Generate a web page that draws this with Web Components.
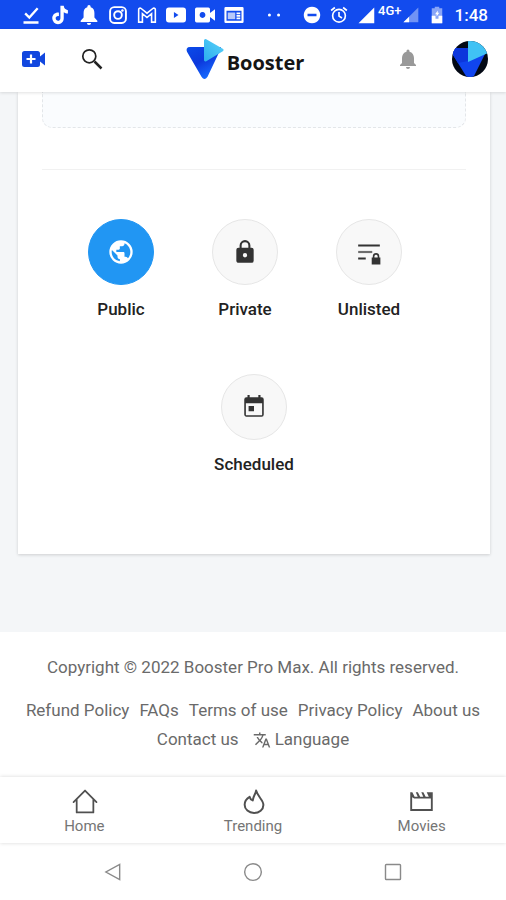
<!DOCTYPE html>
<html lang="en">
<head>
<meta charset="utf-8">
<meta name="viewport" content="width=device-width, initial-scale=1">
<title>Booster</title>
<style>
body { margin: 0; min-height: 100vh; display: flex; flex-direction: column; background: #f4f6f8; color: #222; font-family: Roboto, "Liberation Sans", sans-serif; font-size: 16px; }
main { flex: 1 0 auto; padding: 0 16px 77px 18px; }
</style>
</head>
<body>
<status-bar></status-bar>
<app-header></app-header>
<main><upload-card><privacy-picker></privacy-picker></upload-card></main>
<app-footer>Copyright © 2022 Booster Pro Max. All rights reserved.</app-footer>
<tab-bar>
  <tab-item icon="home" href="#home">Home</tab-item>
  <tab-item icon="fire" href="#trending">Trending</tab-item>
  <tab-item icon="movie" href="#movies">Movies</tab-item>
</tab-bar>
<system-nav></system-nav>
<script>
const ICONS = {
  download: '<path d="M5 10l5 5L20 4M3 21h18" fill="none" stroke="currentColor" stroke-width="2.8"/>',
  tiktok: '<path d="M12.5 1h4c.3 3 2 4.800 5 5.200v4c-2 0-3.600-.6-5-1.600v7.400c0 4.300-3.200 7-6.900 7A6.900 6.900 0 0 1 2.700 16c0-4.300 3.600-7.300 8-6.800v4.200c-2.200-.6-3.900.7-3.900 2.600 0 1.700 1.300 2.900 2.900 2.900s2.800-1.300 2.800-3.100z"/>',
  alert: '<path d="M12 0a2 2 0 0 0-2 2v.7C6.800 3.500 5.500 6.200 5.500 9.500V15L2 19v1.500h20V19l-3.500-4V9.500c0-3.300-1.300-6-4.500-6.800V2a2 2 0 0 0-2-2zM9.500 21.500a2.500 2.500 0 0 0 5 0z"/>',
  instagram: '<g fill="none" stroke="currentColor" stroke-width="2.300"><rect x="2.500" y="2.500" width="19" height="19" rx="5"/><circle cx="12" cy="12" r="4.600"/></g><circle cx="17.300" cy="6.700" r="1.500"/>',
  gmail: '<path d="M2 20.500V5.500c0-1.600 1.800-2.300 3-1.300l7 5.600 7-5.600c1.200-1 3-.3 3 1.300v15h-4.500v-10L12 15 6.500 10.500v10z" fill="none" stroke="currentColor" stroke-width="1.900"/>',
  youtube: '<path fill-rule="evenodd" d="M3.500 3h17Q24 3 24 6.500v11q0 3.500-3.500 3.500h-17Q0 21 0 17.500v-11Q0 3 3.500 3zM9.500 8.500v7l5.500-3.500z"/>',
  cam: '<path fill-rule="evenodd" d="M2 3h14q2 0 2 2v4.500L24 5v14l-6-4.500V19q0 2-2 2H2q-2 0-2-2V5q0-2 2-2zM9 8.500a3.500 3.500 0 1 0 .01 0z"/>',
  news: '<path fill-rule="evenodd" d="M2 2.500h20q1.500 0 1.500 1.500v16q0 1.500-1.500 1.500H2Q.5 21.500.5 20V4Q.5 2.500 2 2.500zM3 7v12h18V7z"/><path opacity=".7" d="M4.500 9h9v8h-9z"/><path d="M15 9h4.500v2H15zM15 12h4.500v2H15zM15 15h4.500v2H15z"/>',
  dots: '<circle cx="6.500" cy="12" r="1.800"/><circle cx="17.500" cy="12" r="1.800"/>',
  dnd: '<path fill-rule="evenodd" d="M12 1a11 11 0 1 0 .01 0zM6 10.200h12v3.600H6z"/>',
  alarm: '<circle cx="12" cy="13" r="8.500" fill="none" stroke="currentColor" stroke-width="2.200"/><path d="M12 8v5.500l4 2.500M1.500 6L6.500 2M22.500 6l-5-4" fill="none" stroke="currentColor" stroke-width="2.200"/>',
  signal: '<path d="M23 2v21H2z"/>',
  weak: '<path d="M23 2v21H2z" opacity=".4"/><path d="M10 15v8H2z"/>',
  battery: '<path opacity=".5" d="M9 1h6v2h4v20H5V3h4z"/><path d="M5 13h5v4h4v-4h5v10H5zM9.500 11L13 6v3h2l-3.500 5v-3z"/>',
  create: '<path fill-rule="evenodd" d="M2.500 4h13Q18 4 18 6.500v3L23 5.500v13L18 14.500v3q0 2.500-2.500 2.500h-13Q0 20 0 17.500v-11Q0 4 2.500 4zM7.900 7.500V11H4.500v2h3.400v3.500h2.200V13h3.400v-2h-3.400V7.500z"/>',
  search: '<path d="M14.500 14.500l7 7" fill="none" stroke="currentColor" stroke-width="2.500"/><circle cx="9.300" cy="9.300" r="6.500" fill="none" stroke="currentColor" stroke-width="1.700"/>',
  bell: '<path d="M12 22a2 2 0 0 0 2-2h-4a2 2 0 0 0 2 2zm6-6v-5c0-3.070-1.630-5.640-4.500-6.320V4a1.500 1.500 0 0 0-3 0v.68C7.640 5.360 6 7.920 6 11v5l-2 2v1h16v-1z"/>',
  globe: '<path d="M12 2a10 10 0 1 0 0 20 10 10 0 0 0 0-20zm-1 17.930A7.990 7.990 0 0 1 4 12c0-.62.08-1.210.21-1.790L9 15v1c0 1.100.9 2 2 2zm6.900-2.540A1.990 1.990 0 0 0 16 16h-1v-3c0-.55-.45-1-1-1H8v-2h2c.55 0 1-.45 1-1V7h2c1.100 0 2-.9 2-2v-.41a7.990 7.990 0 0 1 2.900 12.800z"/>',
  lock: '<path d="M18 8h-1V6A5 5 0 0 0 7 6v2H6a2 2 0 0 0-2 2v10c0 1.100.9 2 2 2h12a2 2 0 0 0 2-2V10a2 2 0 0 0-2-2zm-6 9a2 2 0 1 1 0-4 2 2 0 0 1 0 4zm3.100-9H8.900V6a3.100 3.100 0 0 1 6.200 0z"/>',
  unlisted: '<path d="M2 5h20v2H2zM2 17h7v2H2z"/><path opacity=".7" d="M2 11h13v2H2z"/><path fill-rule="evenodd" d="M14.500 17h1v-1a3 3 0 0 1 6 0v1h1v6.500h-8zm2.500 0h3v-1a1.500 1.500 0 0 0-3 0z"/>',
  calendar: '<path d="M19 3h-1V1h-2v2H8V1H6v2H5a2 2 0 0 0-2 2v14c0 1.100.9 2 2 2h14a2 2 0 0 0 2-2V5a2 2 0 0 0-2-2zm.5 16.500h-15V8.500h15zM7 11h5v5H7z"/>',
  translate: '<path d="M12.870 15.070l-2.540-2.510.03-.03A17.520 17.520 0 0 0 14.070 6H17V4h-7V2H8v2H1v2h11.170A15.700 15.700 0 0 1 9 11.350 15.600 15.600 0 0 1 6.690 8h-2a17.600 17.600 0 0 0 2.980 4.560L2.580 17.580 4 19l5-5 3.110 3.110zM18.500 10h-2L12 22h2l1.120-3h4.750L21 22h2zm-2.620 7l1.620-4.330L19.120 17z"/>',
  home: '<path d="M4.500 10v12.500h16V10M1.500 12.500L12.500 1.500l11 11" fill="none" stroke="currentColor" stroke-width="1.700" stroke-linejoin="round" stroke-linecap="round"/>',
  fire: '<path d="M14.500 1.500c-.5 3.500-2.700 5-3.200 9.500C9.200 10 8.500 8.800 8.300 7.500 5 9.500 3.500 12 3.500 15c0 4.600 4 8 9 8s9-3.300 9-7.700c0-4.900-5.300-7.500-7-13.800z" fill="none" stroke="currentColor" stroke-width="1.900" stroke-linejoin="round"/>',
  movie: '<path d="M1.200 3h2l2.200 4.500h3L6.500 3h2l2.200 4.500h3L11.800 3h2L16 7.500h3L17 3h5.800v18H1.200zM3 8v11.200h18V9H5z" fill-rule="evenodd"/>',
  back: '<path d="M20 3v18L3.500 12z" fill="none" stroke="currentColor" stroke-width="1.700"/>',
  circle: '<circle cx="12" cy="12" r="10" fill="none" stroke="currentColor" stroke-width="1.700"/>',
  square: '<rect x="3" y="3" width="18" height="18" rx="1" fill="none" stroke="currentColor" stroke-width="1.700"/>'
};

function define(name, html) {
  const template = document.createElement('template');
  template.innerHTML = html;
  customElements.define(name, class extends HTMLElement {
    constructor() { super(); this.attachShadow({ mode: 'open' }).append(template.content.cloneNode(true)); }
  });
}

customElements.define('ui-icon', class extends HTMLElement {
  connectedCallback() {
    if (this.shadowRoot) return;
    this.attachShadow({ mode: 'open' }).innerHTML =
      `<style>:host{display:block;flex:none;width:var(--size,20px);height:var(--size,20px)}svg{display:block;width:100%;height:100%;overflow:visible}</style>
       <svg viewBox="0 0 24 24" fill="currentColor" aria-hidden="true">${ICONS[this.getAttribute('name')]}</svg>`;
  }
});

define('status-bar', `<style>
  :host { display: flex; justify-content: space-between; align-items: center; height: 29px; padding: 0 18px 0 21px; background: #124bee; color: #fff; }
  .group { display: flex; align-items: center; }
  .apps { gap: 9px; --size: 20px; }
  .state { gap: 9px; --size: 18px; }
  .net { display: flex; align-items: center; }
  .net ui-icon:last-child { --size: 17px; }
  small { font-size: 13px; line-height: 12px; font-weight: 500; padding-bottom: 8px; margin-left: 3px; }
  time { font-size: 17px; font-weight: 500; }
</style>
<div class="group apps"><ui-icon name="download"></ui-icon><ui-icon name="tiktok"></ui-icon><ui-icon name="alert"></ui-icon><ui-icon name="instagram"></ui-icon><ui-icon name="gmail"></ui-icon><ui-icon name="youtube"></ui-icon><ui-icon name="cam"></ui-icon><ui-icon name="news"></ui-icon></div>
<ui-icon name="dots"></ui-icon>
<div class="group state"><ui-icon name="dnd"></ui-icon><ui-icon name="alarm"></ui-icon><span class="net"><ui-icon name="signal"></ui-icon><small>4G+</small><ui-icon name="weak"></ui-icon></span><ui-icon name="battery"></ui-icon><time>1:48</time></div>`);

define('brand-logo', `<style>
  :host { display: block; }
  a { display: flex; align-items: center; gap: 3px; color: #151515; text-decoration: none; font: 700 20px/28px "Open Sans", "Noto Sans", sans-serif; }
  svg { display: block; }
  span { padding-top: 7px; }
</style>
<a href="#top"><svg width="38" height="42" viewBox="0 0 38 42" aria-hidden="true">
  <defs><linearGradient id="b" x1="0" y1="0" x2=".6" y2="1"><stop offset="0" stop-color="#0a4ae8"/><stop offset=".5" stop-color="#0c38dc"/><stop offset="1" stop-color="#176bff"/></linearGradient>
  <linearGradient id="c" x1="0" y1="1" x2="1" y2="0"><stop offset="0" stop-color="#2fb0f0"/><stop offset="1" stop-color="#58d0f7"/></linearGradient></defs>
  <path d="M4 10h30L20.500 38.500q-2 3-4 0L2 13.500q-1.500-3.500 2-3.500z" fill="url(#b)" stroke="url(#b)" stroke-width="2" stroke-linejoin="round"/>
  <path d="M19.500 2.500L36 12 19.500 22z" fill="url(#c)" stroke="url(#c)" stroke-width="3" stroke-linejoin="round"/>
</svg><span>Booster</span></a>`);

define('app-header', `<style>
  :host { display: grid; box-sizing: border-box; grid-template-columns: 1fr auto 1fr; align-items: center; height: 63px; padding: 0 18px 3px 22px; background: #fff; box-shadow: 0 1px 3px rgba(0,0,0,.12); z-index: 1; }
  brand-logo { padding-right: 20px; }
  .side { display: flex; align-items: center; gap: 34px; }
  .end { justify-content: flex-end; gap: 32px; }
  button { display: block; border: 0; padding: 0; background: none; color: #222; }
  .create { color: #1247df; --size: 24px; }
  .search { --size: 24px; }
  .bell { color: #999; --size: 24px; }
  .avatar svg { display: block; }
</style>
<div class="side"><button class="create" aria-label="Create"><ui-icon name="create"></ui-icon></button><button class="search" aria-label="Search"><ui-icon name="search"></ui-icon></button></div>
<brand-logo></brand-logo>
<div class="side end"><button class="bell" aria-label="Notifications"><ui-icon name="bell"></ui-icon></button>
<button class="avatar" aria-label="Account"><svg width="36" height="36" viewBox="0 0 36 36" aria-hidden="true"><defs><clipPath id="r"><circle cx="18" cy="18" r="18"/></clipPath></defs><g clip-path="url(#r)"><path d="M0 0h36v36H0z" fill="#020814"/><path d="M0 7h28l5 6-11 22q-4 3-8 0L1 14z" fill="#1045ef"/><path d="M0 7h16v13L6 22 1 14z" fill="#0c36dc"/><path d="M16 0h12l8 12-20 9z" fill="#40c2f4"/></g></svg></button></div>`);

define('upload-card', `<style>
  :host { display: block; padding: 0 24px 80px; background: #fff; box-shadow: 0 1px 3px rgba(0,0,0,.16); }
  .drop { height: 35px; border: 1px dashed #e3e6e9; border-top: 0; border-radius: 0 0 10px 10px; background: #fafcfe; }
  hr { margin: 41px 0 49px; border: 0; border-top: 1px solid #f1f1f1; }
</style>
<div class="drop"></div><hr><slot></slot>`);

customElements.define('privacy-picker', class extends HTMLElement {
  constructor() {
    super();
    const option = (id, label, icon, on) => `<label for="${id}"><span class="disc"><input type="radio" name="privacy" id="${id}"${on ? ' checked' : ''}><ui-icon name="${icon}"></ui-icon></span>${label}</label>`;
    this.attachShadow({ mode: 'open' }).innerHTML = `<style>
      :host { display: flex; flex-direction: column; gap: 55px; }
      .row { display: flex; justify-content: center; }
      .three { padding-right: 18px; }
      label { display: flex; flex-direction: column; align-items: center; gap: 14px; width: 124px; font-size: 17px; line-height: 20px; font-weight: 500; color: #222; }
      .disc { display: grid; place-items: center; color: #333; --size: 26px; }
      .disc:has(#public) { --size: 28px; }
      input, ui-icon { grid-area: 1 / 1; }
      input { appearance: none; box-sizing: border-box; width: 66px; height: 66px; margin: 0; border: 1px solid #e6e6e6; border-radius: 50%; background: #f8f8f8; }
      input:checked { background: #2196f3; border-color: #2196f3; }
      input:checked + ui-icon { color: #fff; }
      ui-icon { pointer-events: none; }
    </style>
    <div class="row three">${option('public', 'Public', 'globe', true)}${option('private', 'Private', 'lock')}${option('unlisted', 'Unlisted', 'unlisted')}</div>
    <div class="row">${option('scheduled', 'Scheduled', 'calendar')}</div>`;
  }
});

define('app-footer', `<style>
  :host { display: block; padding: 20px 16px 23px; background: #fff; color: #6a6a6a; text-align: center; font-size: 17px; line-height: 30px; }
  p { margin: 0 0 14px; }
  nav { display: flex; flex-wrap: wrap; justify-content: center; column-gap: 10px; line-height: 29px; }
  a { display: flex; align-items: center; gap: 4px; color: inherit; text-decoration: none; --size: 18px; }
  .lang { padding-left: 4px; }
</style>
<p><slot></slot></p>
<nav><a href="#refund">Refund Policy</a><a href="#faqs">FAQs</a><a href="#terms">Terms of use</a><a href="#privacy">Privacy Policy</a><a href="#about">About us</a><a href="#contact">Contact us</a><a class="lang" href="#language"><ui-icon name="translate"></ui-icon>Language</a></nav>`);

define('tab-bar', `<style>
  :host { display: flex; height: 66px; background: #fff; box-shadow: 0 0 4px rgba(0,0,0,.16); z-index: 1; }
</style><slot></slot>`);

customElements.define('tab-item', class extends HTMLElement {
  connectedCallback() {
    if (this.shadowRoot) return;
    this.attachShadow({ mode: 'open' }).innerHTML = `<style>
      :host { display: block; flex: 1; }
      a { display: flex; flex-direction: column; align-items: center; gap: 2px; padding-top: 12px; color: #757575; text-decoration: none; font-size: 15px; line-height: 20px; }
      ui-icon { --size: 25px; color: #505050; }
    </style><a href="${this.getAttribute('href')}"><ui-icon name="${this.getAttribute('icon')}"></ui-icon><slot></slot></a>`;
  }
});

define('system-nav', `<style>
  :host { display: flex; justify-content: center; align-items: center; gap: 120px; height: 57px; background: #fff; color: #8a8a8a; }
  button { display: block; border: 0; padding: 0; background: none; color: inherit; --size: 20px; }
</style>
<button aria-label="Back"><ui-icon name="back"></ui-icon></button><button aria-label="Home"><ui-icon name="circle"></ui-icon></button><button aria-label="Recent apps"><ui-icon name="square"></ui-icon></button>`);
</script>
</body>
</html>
